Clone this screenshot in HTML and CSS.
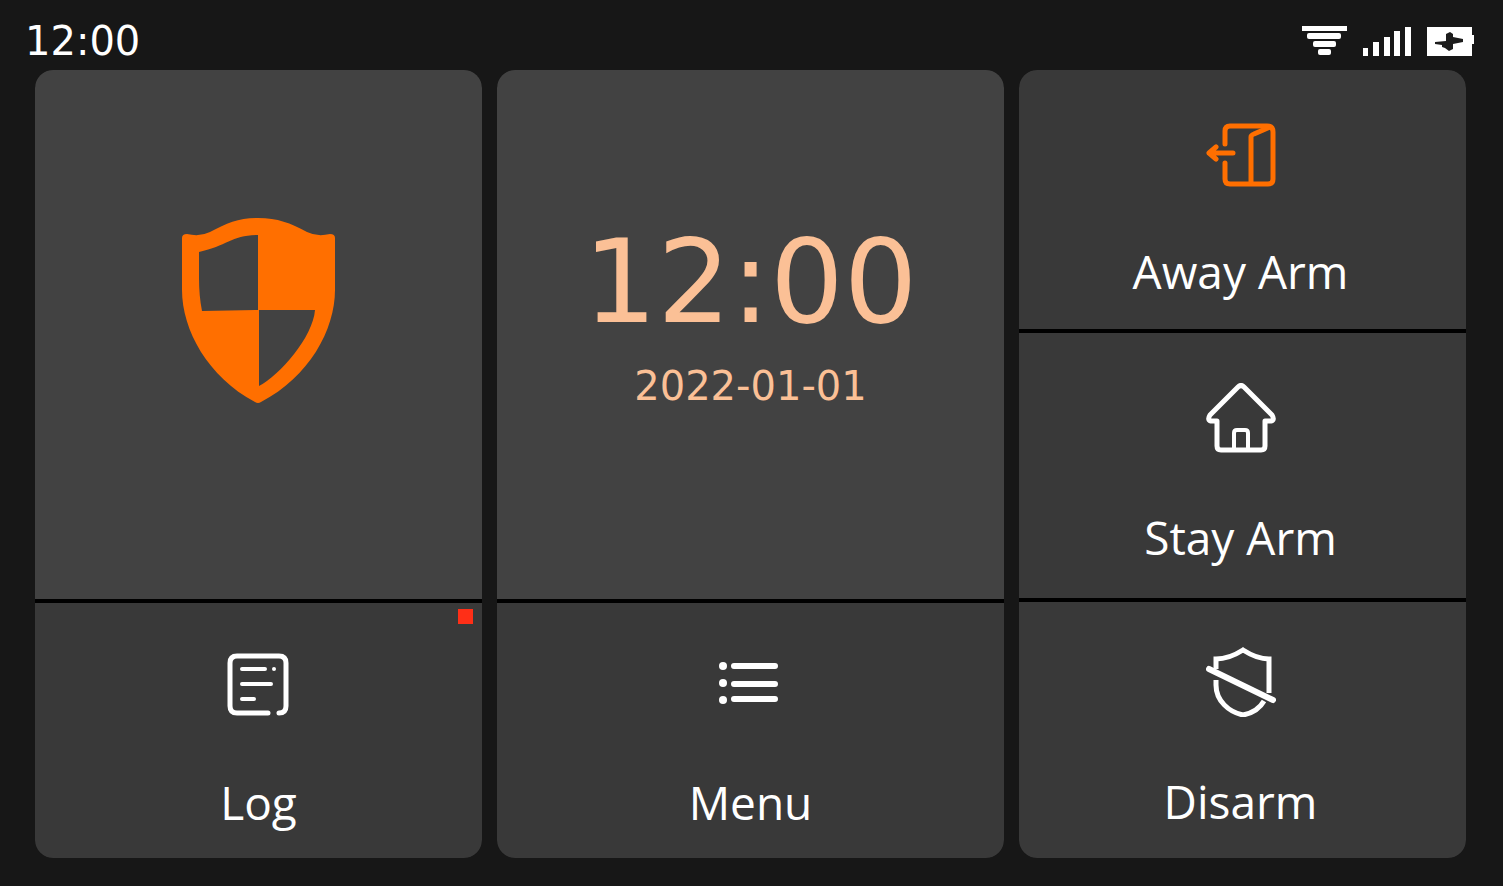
FILE: index.html
```html
<!DOCTYPE html>
<html lang="en">
	<head>
		<meta charset="UTF-8">
		<meta name="viewport" content="width=device-width, initial-scale=1">
		<title>Alarm Panel</title>
		<link rel="stylesheet" href="styles.css">
	</head>
	<body>
		<header class="status">
			<time class="status-time">12:00</time>
			<div class="status-icons">
				<svg width="45" height="30" viewBox="0 0 45 30" fill="#fff" role="img" aria-label="Wi-Fi">
					<rect x="0" y="0" width="45" height="5"/>
					<rect x="5" y="7" width="34" height="6" rx="2"/>
					<rect x="11" y="15" width="23" height="6" rx="2"/>
					<rect x="16" y="23" width="13" height="6" rx="2"/>
				</svg>
				<svg width="48" height="30" viewBox="0 0 48 30" fill="#fff" role="img" aria-label="Signal">
					<rect x="0" y="22" width="5" height="8"/>
					<rect x="10" y="16" width="6" height="14"/>
					<rect x="21" y="11" width="6" height="19"/>
					<rect x="31" y="5" width="6" height="25"/>
					<rect x="42" y="1" width="6" height="29"/>
				</svg>
				<svg width="47" height="30" viewBox="0 0 47 30" role="img" aria-label="Battery charging">
					<path d="M0 1h45v8h2v9h-2v12H0z" fill="#fff"/>
					<path d="M8 16L19 15V8L23 6L26 8V11L36 13V16L26 18V23L22 25L18 22L15 21V19L8 18Z" fill="#1c1c1c"/>
				</svg>
			</div>
		</header>

		<main class="panel">
			<section class="column">
				<div class="screen screen-shield">
					<svg width="153" height="185" viewBox="0 0 153 185" role="img" aria-label="Protection">
						<path fill="#ff6f00" fill-rule="evenodd" d="M0 20Q0 16 5 16Q18 19 28 14C45 5 57 0 76 0C96 0 108 5 125 14Q135 19 148 16Q153 16 153 20V72C153 112 127 159 79 184Q76 186 73 184C26 159 0 112 0 72ZM17 34V60Q17 78 20 93L76 92V17C50 17 45 28 17 34ZM77 92V168C98 157 131 119 133 92Z"/>
					</svg>
				</div>
				<button class="tile tile-log" type="button">
					<svg class="icon" viewBox="0 0 70 70">
						<path d="M44 65H13Q6 65 6 58V15Q6 8 13 8H55Q62 8 62 15V58Q62 65 55 65"/>
						<path d="M18 21H41M18 36H47M18 51H30" stroke-width="4"/>
						<circle class="dot" cx="50" cy="21" r="2"/>
					</svg>
					<span class="label">Log</span>
					<span class="badge"></span>
				</button>
			</section>

			<section class="column">
				<div class="screen screen-clock">
					<time class="clock">12:00</time>
					<time class="date">2022-01-01</time>
				</div>
				<button class="tile tile-menu" type="button">
					<svg class="icon" viewBox="0 0 70 70">
						<path d="M18 18H59M18 36H59M18 51H59" stroke-width="6"/>
						<circle class="dot" cx="7" cy="18" r="4"/>
						<circle class="dot" cx="7" cy="35" r="4"/>
						<circle class="dot" cx="7" cy="52" r="4"/>
					</svg>
					<span class="label">Menu</span>
				</button>
			</section>

			<section class="column column-arm">
				<button class="tile tile-away" type="button">
					<svg class="icon" viewBox="0 0 70 70">
						<path d="M19 27V14Q19 9 24 9H61Q67 9 67 15V62Q67 67 62 67H24Q19 67 19 62V46"/>
						<path d="M45 66V20Q45 18 48 17L64 10"/>
						<path d="M27 36H3M10 30L3 36L10 42"/>
					</svg>
					<span class="label">Away Arm</span>
				</button>
				<button class="tile tile-stay" type="button">
					<svg class="icon" viewBox="0 0 70 70">
						<path d="M32 4Q35 1 38 4L66 32Q69 37 65 38H59V63Q59 67 55 67H15Q11 67 11 63V38H5Q1 37 4 32Z"/>
						<path d="M28 66V50Q28 47 31 47H39Q42 47 42 50V66" stroke-width="4"/>
					</svg>
					<span class="label">Stay Arm</span>
				</button>
				<button class="tile tile-disarm" type="button">
					<svg class="icon" viewBox="0 0 70 70">
						<path d="M10 22V12Q23 12 37 3Q51 12 63 12V46M10 33V38C10 54 23 65 37 68C47 66 54 61 58 54" stroke-linecap="butt" stroke-linejoin="miter"/>
						<path d="M3 22L67 53" stroke-width="6"/>
					</svg>
					<span class="label">Disarm</span>
				</button>
			</section>
		</main>
	</body>
</html>
```
FILE: styles.css
```css
*{
	box-sizing: border-box;
}
body{
	margin: 0;
	min-height: 100vh;
	display: flex;
	flex-direction: column;
	background: #171717;
	color: #fff;
	font-family: "Open Sans", "Noto Sans", sans-serif;
}
/* status bar */
.status{
	height: 70px;
	padding: 12px 29px 0 25px;
	display: flex;
	justify-content: space-between;
	align-items: center;
}
.status-time{
	font: 40px/56px "DejaVu Sans", sans-serif;
}
.status-icons{
	display: flex;
	gap: 16px;
}
.status-icons svg{
	display: block;
}
/* three columns of tiles */
.panel{
	flex: 1;
	display: grid;
	grid-template-columns: 447fr 507fr 447fr;
	gap: 15px;
	padding: 0 37px 28px 35px;
}
.column{
	display: grid;
	grid-template-rows: 529fr 255fr;
	gap: 4px;
	background: #000;
	border-radius: 18px;
	overflow: hidden;
}
.column-arm{
	grid-template-rows: 259fr 265fr 256fr;
}
.screen{
	display: flex;
	flex-direction: column;
	align-items: center;
	justify-content: center;
	background: #424242;
}
.screen-shield{
	padding-bottom: 48px;
}
.screen-clock{
	padding-bottom: 40px;
	gap: 26px;
	color: #fbc096;
	font-family: "DejaVu Sans", sans-serif;
}
.clock{
	font-size: 116px;
	line-height: 116px;
}
.date{
	font-size: 40px;
	line-height: 40px;
}
.tile{
	position: relative;
	display: flex;
	flex-direction: column;
	align-items: center;
	justify-content: center;
	gap: 54px;
	margin: 0;
	padding: 18px 0 0;
	border: 0;
	background: #393939;
	color: #fff;
	font-family: inherit;
	cursor: pointer;
}
.tile:active{
	background: #2f2f2f;
}
.column-arm .tile{
	padding-right: 4px;
}
.label{
	font-size: 46px;
	line-height: 60px;
}
.icon{
	width: 70px;
	height: 70px;
	fill: none;
	stroke: #fff;
	stroke-width: 5;
	stroke-linecap: round;
	stroke-linejoin: round;
}
.icon .dot{
	fill: #fff;
	stroke: none;
}
.tile-away .icon{
	stroke: #ff6f00;
}
/* unread log mark */
.badge{
	position: absolute;
	top: 6px;
	right: 9px;
	width: 15px;
	height: 15px;
	background: #ff2f17;
}
```
